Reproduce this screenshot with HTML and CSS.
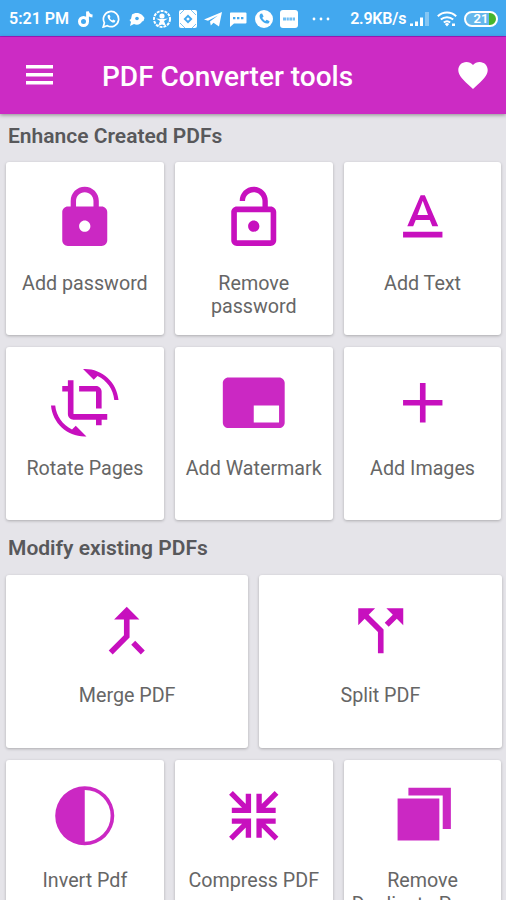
FILE: index.html
```html
<!DOCTYPE html>
<html lang="en">
<head>
    <meta charset="UTF-8">
    <meta name="viewport" content="width=device-width, initial-scale=1.0">
    <title>PDF Converter tools</title>
    <link rel="stylesheet" href="styles.css">
</head>
<body>
    <div class="status-bar">
        <span class="time">5:21 PM</span>
        <div class="notifications">
            <svg viewBox="0 0 18 18"><circle cx="6.500" cy="11.500" r="4" fill="none" stroke="#fff" stroke-width="3"/><path d="M10.500 12V1.500c.4 2.800 2 4.200 5 4.500" fill="none" stroke="#fff" stroke-width="2.800"/></svg>
            <svg viewBox="0 0 18 18"><path d="M1.200 17l1.200-4.200A7.600 7.600 0 1 1 5.300 15.700z" fill="none" stroke="#fff" stroke-width="1.700"/><path d="M6 5c-2 2.500 3.500 8.500 6.500 7.500l1-1.700-2.300-1.300-1 .9c-1-.4-2-1.300-2.500-2.400l.8-1L7.500 4.800z" fill="#fff"/></svg>
            <svg viewBox="0 0 18 18"><path d="M4 4.500c2-2 7-2.300 9.500 0 1.600 1.500 2.500 2.500 3 3.500l-1 3-1.500.5c-1 3-5 4-8 2.500L2 16l1-4-1.500-2 1.500-1z" fill="#fff"/><circle cx="9" cy="8.500" r="1.800" fill="#42a8ef"/></svg>
            <svg viewBox="0 0 18 18"><circle cx="9" cy="9" r="8" fill="none" stroke="#fff" stroke-width="2" stroke-dasharray="3 1"/><circle cx="9" cy="6" r="2.600" fill="#fff"/><path d="M3 8.500l5 .5h2l5-.5-4 2.500 2 5-4-1.500L5 16l2-5z" fill="#fff"/></svg>
            <svg viewBox="0 0 18 18"><rect width="18" height="18" rx="2" fill="#fff"/><path d="M9 4.500L13.500 9 9 13.500 4.500 9z" fill="#42a8ef"/><path d="M1 4l4-4M17 14l-4 4M12 0l5 5M1 13l5 5" stroke="#42a8ef" stroke-width=".7"/><path d="M9 7.200L10.800 9 9 10.800 7.200 9z" fill="#fff"/></svg>
            <svg viewBox="0 0 18 18"><path d="M0 9.500L18 2l-3 14.500-5.500-3.800L6.800 15.500 6 11.500l8-6-10 5.300z" fill="#fff"/></svg>
            <svg viewBox="0 0 18 18"><path d="M1.500 2.500h15a1 1 0 0 1 1 1v9a1 1 0 0 1-1 1H5L1 17V3.500a1 1 0 0 1 .5-1z" fill="#fff"/><path d="M4 7h2.400v2.200H4zm4 0h2.400v2.200H8zm4 0h2.400v2.200H12z" fill="#42a8ef"/></svg>
            <svg viewBox="0 0 18 18"><circle cx="9" cy="9" r="9" fill="#fff"/><path d="M5.500 3.800c-3.800 3.500 4.500 12 8.500 9.200l.6-1.700-2.900-1.600-1.300 1.200C9 10.300 7.800 9 7.300 7.700l1.300-1.200-1.500-3z" fill="#42a8ef"/></svg>
            <svg viewBox="0 0 18 18"><rect width="18" height="18" rx="3" fill="#fff"/><path d="M3 7.500h3v3H3zm3.600 0h2.200v3H6.600zm2.800 0h2.800v3H9.400zm3.400 0H15v3h-2.200z" fill="#42a8ef" opacity=".75"/></svg>
        </div>
        <svg class="more" viewBox="0 0 18 4"><circle cx="2" cy="2" r="1.400"/><circle cx="9" cy="2" r="1.400"/><circle cx="16" cy="2" r="1.400"/></svg>
        <span class="speed">2.9KB/s</span>
        <svg class="signal" viewBox="0 0 19 16"><path d="M0 12.500h3V15H0zm5-2h3V15H5zm5-4h3V15h-3z" fill="#fff"/><path d="M15 1h4v14h-4z" fill="#fff" opacity=".35"/></svg>
        <svg class="wifi" viewBox="0 0 20 16"><path d="M.8 5.200a13.500 13.500 0 0 1 18.400 0M3.800 8.500a9.300 9.300 0 0 1 12.400 0M6.800 11.500a5 5 0 0 1 6.400 0" fill="none" stroke="#fff" stroke-width="2"/><path d="M7.800 13l2.200 2.500 2.200-2.500a3.500 3.500 0 0 0-4.400 0zM15 12.500h3V15h-3z" fill="#fff"/></svg>
        <div class="battery"><span>21</span></div>
    </div>

    <header class="app-bar">
        <svg class="menu" viewBox="0 0 27 20"><path d="M0 0h27v3.500H0zM0 8h27v3.500H0zM0 16h27v3.500H0z" fill="#fff"/></svg>
        <h1>PDF Converter tools</h1>
        <svg class="heart" viewBox="2 3 20 18.350"><path d="M12 21.350l-1.450-1.320C5.400 15.360 2 12.280 2 8.500 2 5.420 4.420 3 7.500 3c1.740 0 3.410.81 4.500 2.090C13.090 3.810 14.760 3 16.500 3 19.580 3 22 5.420 22 8.500c0 3.780-3.400 6.860-8.550 11.540L12 21.350z" fill="#fff"/></svg>
    </header>

    <main>
        <h2>Enhance Created PDFs</h2>
        <div class="row">
            <div class="card">
                <svg class="icon solid" viewBox="0 0 24 24"><path d="M18 8h-1V6c0-2.760-2.240-5-5-5S7 3.240 7 6v2H6c-1.100 0-2 .9-2 2v10c0 1.100.9 2 2 2h12c1.100 0 2-.9 2-2V10c0-1.100-.9-2-2-2zm-6 9c-1.100 0-2-.9-2-2s.9-2 2-2 2 .9 2 2-.9 2-2 2zm3.100-9H8.900V6c0-1.710 1.390-3.100 3.100-3.100 1.710 0 3.100 1.390 3.100 3.100v2z"/></svg>
                <p>Add password</p>
            </div>
            <div class="card">
                <svg class="icon" viewBox="0 0 24 24"><path d="M12 17c1.100 0 2-.9 2-2s-.9-2-2-2-2 .9-2 2 .9 2 2 2zm6-9h-1V6c0-2.760-2.240-5-5-5S7 3.240 7 6h1.900c0-1.710 1.390-3.100 3.100-3.100 1.710 0 3.100 1.390 3.100 3.100v2H6c-1.100 0-2 .9-2 2v10c0 1.100.9 2 2 2h12c1.100 0 2-.9 2-2V10c0-1.100-.9-2-2-2zm0 12H6V10h12v10z"/></svg>
                <p>Remove<br>password</p>
            </div>
            <div class="card">
                <svg class="icon" viewBox="0 0 24 24"><path d="M5 17v2h14v-2H5zm4.500-4.200h5l.9 2.200h2.100L12.750 4h-1.500L6.500 15h2.100l.9-2.200zM12 5.980L13.870 11h-3.740L12 5.980z"/></svg>
                <p>Add Text</p>
            </div>
        </div>
        <div class="row">
            <div class="card">
                <svg class="icon" viewBox="0 0 24 24"><path d="M7.470 21.490C4.200 19.930 1.860 16.760 1.500 13H0c.51 6.160 5.660 11 11.950 11 .23 0 .44-.02.66-.03L8.800 20.150l-1.330 1.340zM12.050 0c-.23 0-.44.02-.66.04l3.810 3.810 1.330-1.330C19.800 4.070 22.140 7.240 22.500 11H24c-.51-6.160-5.660-11-11.950-11zM16 14h2V8c0-1.110-.9-2-2-2h-6v2h6v6zm-8 2V4H6v2H4v2h2v8c0 1.100.89 2 2 2h8v2h2v-2h2v-2H8z"/></svg>
                <p>Rotate Pages</p>
            </div>
            <div class="card">
                <svg class="icon solid" viewBox="0 0 24 24"><path d="M21 3H3c-1.100 0-2 .9-2 2v14c0 1.100.9 2 2 2h18c1.100 0 2-.9 2-2V5c0-1.100-.9-2-2-2zm0 16h-9v-6h9v6z"/></svg>
                <p>Add Watermark</p>
            </div>
            <div class="card">
                <svg class="icon" viewBox="0 0 24 24"><path d="M19 13h-6v6h-2v-6H5v-2h6V5h2v6h6v2z"/></svg>
                <p>Add Images</p>
            </div>
        </div>

        <h2 class="modify">Modify existing PDFs</h2>
        <div class="row">
            <div class="card">
                <svg class="icon" viewBox="0 0 24 24"><path d="M17 20.410L18.410 19 15 15.590 13.590 17 17 20.410zM7.500 8H11v5.590L5.590 19 7 20.410l6-6V8h3.500L12 3.500 7.500 8z"/></svg>
                <p>Merge PDF</p>
            </div>
            <div class="card">
                <svg class="icon" viewBox="0 0 24 24"><path d="M14 4l2.290 2.290-2.880 2.880 1.420 1.420 2.880-2.880L20 10V4zm-4 0H4v6l2.290-2.290 4.710 4.700V20h2v-8.410l-5.290-5.300z"/></svg>
                <p>Split PDF</p>
            </div>
        </div>
        <div class="row">
            <div class="card">
                <svg class="icon solid" viewBox="0 0 24 24"><path d="M12 1.500a10.500 10.500 0 1 0 0 21 10.500 10.500 0 0 0 0-21zm0 1.300a9.200 9.200 0 0 1 0 18.400z"/></svg>
                <p>Invert Pdf</p>
            </div>
            <div class="card">
                <svg class="icon lines" viewBox="0 0 24 24"><path d="M4.200 10.100h5.900V4.200M3.900 3.900l6.200 6.200M19.800 10.100h-5.900V4.200M20.100 3.900l-6.200 6.200M4.200 13.900h5.900v5.900M3.900 20.100l6.200-6.200M19.800 13.900h-5.900v5.900M20.100 20.100l-6.200-6.200"/></svg>
                <p>Compress PDF</p>
            </div>
            <div class="card">
                <svg class="icon solid" viewBox="0 0 24 24"><path d="M3.050 5.900H17.900v14.900H3.050zM6.900 2H22v14.700h-2.900V4.800H6.900z"/></svg>
                <p>Remove<br>Duplicate Pages</p>
            </div>
        </div>
    </main>
</body>
</html>
```
FILE: styles.css
```css
* { box-sizing: border-box; }
body {
    margin: 0;
    height: 900px;
    overflow: hidden;
    background: #e5e4e9;
    font-family: Roboto, sans-serif;
}
.status-bar {
    display: flex;
    align-items: center;
    height: 37px;
    padding: 1px 8px 0 9px;
    background: #42a8ef;
    border-bottom: 1px solid #a51bc4;
    color: #fff;
    font-size: 16px;
    font-weight: 600;
}
.status-bar svg { flex: none; }
.time {
    width: 68px;
    white-space: nowrap;
}
.notifications {
    display: flex;
    gap: 7.4px;
}
.notifications svg {
    width: 18px;
    height: 18px;
}
.more {
    width: 18px;
    height: 4px;
    margin-left: 14px;
    fill: #fff;
}
.speed {
    width: 60px;
    margin-left: 20px;
    letter-spacing: -0.2px;
    white-space: nowrap;
}
.signal {
    width: 19px;
    height: 16px;
}
.wifi {
    width: 20px;
    height: 16px;
    margin-left: 8px;
}
.battery {
    width: 34px;
    height: 16px;
    margin-left: auto;
    border: 2px solid #fff;
    border-radius: 8px;
    background: linear-gradient(to right, #65b7ec 23px, #45b52d 23px);
    font-size: 13px;
    line-height: 12px;
    text-align: center;
}
.app-bar {
    display: flex;
    align-items: center;
    height: 77px;
    padding: 0 18px 0 26px;
    background: #cc2bc4;
    box-shadow: 0 1px 4px rgba(0,0,0,0.4);
    color: #fff;
}
.menu {
    width: 27px;
    height: 20px;
    margin-bottom: 2px;
}
.app-bar h1 {
    margin: 3px 0 0 49px;
    font-size: 28px;
    font-weight: 500;
    line-height: 34px;
    white-space: nowrap;
}
.heart {
    width: 30px;
    height: 27px;
    margin-left: auto;
}
main { padding: 0 4.5px 0 6px; }
h2 {
    height: 48px;
    margin: 0;
    padding: 10px 2px 0;
    color: #58585b;
    font-size: 21px;
    font-weight: 600;
    line-height: 25px;
}
.modify {
    height: 42.5px;
    padding-top: 4px;
}
.row {
    display: flex;
    gap: 11px;
    margin-bottom: 12px;
}
.card {
    flex: 1 1 0;
    height: 173px;
    padding: 22px 4px 0;
    background: #fff;
    border-radius: 3px;
    box-shadow: 0 1px 3px rgba(0,0,0,0.25);
    text-align: center;
}
.icon {
    display: block;
    width: 67.5px;
    height: 67.5px;
    margin: 0 auto;
    fill: #c710be;
}
.solid { fill: #cb28c3; }
.lines {
    fill: none;
    stroke: #c710be;
    stroke-width: 1.9;
}
.card p {
    margin: 20px 0 0;
    color: #666;
    font-size: 19.7px;
    line-height: 23.5px;
    white-space: nowrap;
}
```
